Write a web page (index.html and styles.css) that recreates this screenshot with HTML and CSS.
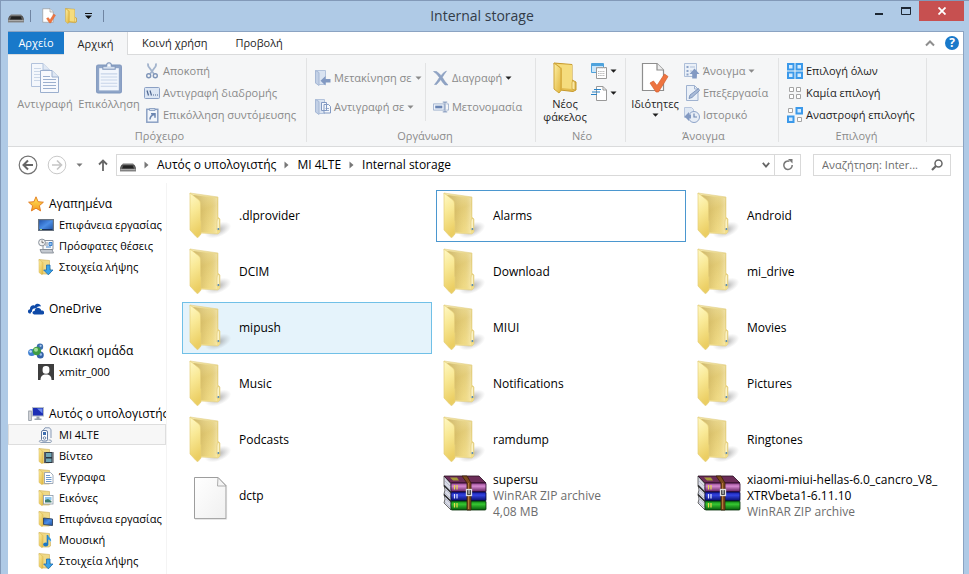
FILE: index.html
```html
<!DOCTYPE html>
<html lang="el">
<head>
<meta charset="utf-8">
<meta name="viewport" content="width=device-width, initial-scale=1">
<title>Internal storage</title>
<link rel="stylesheet" href="styles.css">
</head>
<body>
<svg class="defs" aria-hidden="true">
  <defs>
    <linearGradient id="gBack" x1="0" y1="0" x2="0.3" y2="1"><stop offset="0" stop-color="#f3e7ab"/><stop offset="0.5" stop-color="#e6d07c"/><stop offset="1" stop-color="#f3df8b"/></linearGradient>
    <linearGradient id="gShade" x1="0" y1="0" x2="1" y2="0"><stop offset="0" stop-color="#a5862f" stop-opacity="0.5"/><stop offset="0.7" stop-color="#c7a74c" stop-opacity="0.1"/><stop offset="1" stop-color="#fff" stop-opacity="0.25"/></linearGradient>
    <linearGradient id="gFront" x1="0" y1="0" x2="0.2" y2="1"><stop offset="0" stop-color="#fff9c6"/><stop offset="0.45" stop-color="#f9e996"/><stop offset="1" stop-color="#ebce63"/></linearGradient>
    <radialGradient id="gShadow"><stop offset="0" stop-color="#777" stop-opacity="0.6"/><stop offset="1" stop-color="#999" stop-opacity="0"/></radialGradient>
    <linearGradient id="gGold" x1="0" y1="0" x2="1" y2="1"><stop offset="0" stop-color="#fdf0a4"/><stop offset="1" stop-color="#e0b43c"/></linearGradient>
    <linearGradient id="gPage" x1="0" y1="0" x2="1" y2="1"><stop offset="0" stop-color="#fff"/><stop offset="1" stop-color="#f0f0f0"/></linearGradient>
    <linearGradient id="gPurple" x1="0" y1="0" x2="0" y2="1"><stop offset="0" stop-color="#8c3f86"/><stop offset="0.35" stop-color="#d78bd2"/><stop offset="1" stop-color="#5b1a58"/></linearGradient>
    <linearGradient id="gBlue" x1="0" y1="0" x2="0" y2="1"><stop offset="0" stop-color="#1419a0"/><stop offset="0.35" stop-color="#3344e2"/><stop offset="1" stop-color="#060a66"/></linearGradient>
    <linearGradient id="gGreen" x1="0" y1="0" x2="0" y2="1"><stop offset="0" stop-color="#0a7a14"/><stop offset="0.35" stop-color="#37c832"/><stop offset="1" stop-color="#055a0b"/></linearGradient>
    <linearGradient id="gScreen" x1="0" y1="0" x2="1" y2="1"><stop offset="0" stop-color="#1c4fa8"/><stop offset="0.5" stop-color="#4b8ee6"/><stop offset="1" stop-color="#1d4f9f"/></linearGradient>
    <linearGradient id="gStar" x1="0" y1="0" x2="0" y2="1"><stop offset="0" stop-color="#ffe65a"/><stop offset="1" stop-color="#f59a1f"/></linearGradient>
    <linearGradient id="gDrive" x1="0" y1="0" x2="0" y2="1"><stop offset="0" stop-color="#4b4b4b"/><stop offset="1" stop-color="#8b8b8b"/></linearGradient>
  </defs>

  <symbol id="folder" viewBox="0 0 48 48">
    <ellipse cx="30" cy="38" rx="14" ry="7" fill="url(#gShadow)" transform="rotate(-22 30 38)"/>
    <path d="M2 1 L30 5 V25 L32 27 V40 L30 42 L12 41 Z" fill="url(#gBack)" stroke="#e2d08c" stroke-width="0.6"/>
    <path d="M5 3 L29 6 V41 L12 40 Z" fill="url(#gShade)"/>
    <path d="M2 1 L11 8 Q12.500 9.500 12.500 12 V28 L13 29 V42 L10 45.500 Q9 45.500 8 44.500 L2 38 Z" fill="url(#gFront)" stroke="#e5cf78" stroke-width="0.7"/>
    <path d="M30 26.500 Q31.500 26 31.500 28 V38 H29 V30 Q29 27 30 26.500Z" fill="#fbf3c6" stroke="#d9bf66" stroke-width="0.5"/>
    <path d="M29.600 36h1.600v2h-1.600z" fill="#5f8fb0"/>
  </symbol>

  <symbol id="file" viewBox="0 0 48 48">
    <path d="M6.500 5.500 H30 L38 13.500 V46.500 H6.500 Z" fill="url(#gPage)" stroke="#9d9d9d"/>
    <path d="M30 5.500 L29.500 14 H38 Z" fill="#f4f4f4" stroke="#a5a5a5" stroke-width="0.9"/>
    <path d="M7 47.200H38.600V14" fill="none" stroke="#cfcfcf" stroke-width="0.7"/>
  </symbol>

  <symbol id="rar" viewBox="0 0 48 48">
    <path d="M2 4 L9 12 V38 L2 31 L3 27 L2 22 L3 18 L2 13 Z" fill="#d9dbe6" stroke="#333" stroke-width="0.7"/>
    <path d="M3 9l6 6M3 13l6 6M3 17l6 6M3 21l6 6M3 26l6 6M3 30l6 6" stroke="#b6b9ca" stroke-width="0.9"/>
    <path d="M2 4 H37 L44 11 H9 Z" fill="#6c2d58" stroke="#2b0f22" stroke-width="0.8"/>
    <path d="M8 5.500h7l2 3h-6z" fill="#a59b37"/>
    <rect x="9" y="11" width="35" height="9" rx="1" fill="url(#gPurple)" stroke="#28092a" stroke-width="0.8"/>
    <rect x="9" y="20" width="35" height="9" rx="1" fill="url(#gBlue)" stroke="#040432" stroke-width="0.8"/>
    <rect x="9" y="29" width="35" height="9" rx="1" fill="url(#gGreen)" stroke="#032f06" stroke-width="0.8"/>
    <path d="M12.500 13v4.500M15 13v4.500M12.500 31v4.500M15 31v4.500" stroke="#ead94a" stroke-width="1.200"/>
    <path d="M12.500 22v4.500M15 22v4.500" stroke="#dfe3ff" stroke-width="1.200"/>
    <path d="M2 13.500l7 7M2 22.500l7 7" stroke="#222" stroke-width="1.300"/>
    <path d="M20 4h5l4 7v27h-4V11z" fill="#7d4a1d" stroke="#3b1f08" stroke-width="0.8"/>
    <path d="M26.500 11v26" stroke="#b67a3c"/>
    <rect x="24.500" y="17.500" width="5" height="6" fill="#333" stroke="#e0e0e0" stroke-width="1.300"/>
    <path d="M27 18v4" stroke="#f4f4f4"/>
  </symbol>

  <symbol id="s-folder" viewBox="0 0 16 16">
    <path d="M1 .5 L11.500 1.500 V9 L12.500 10 V14 L11 15 H4Z" fill="#efd987" stroke="#cfae55" stroke-width="0.6"/>
    <path d="M1 .5 L5 3.500 V14.500 L4 15.700 L1 13.500Z" fill="url(#gGold)" stroke="#d7b654" stroke-width="0.5"/>
  </symbol>
  <symbol id="s-down" viewBox="0 0 16 16"><use href="#s-folder"/><path d="M8.500 6h3.500v5h3L10.300 15.800 5.700 11h2.800z" fill="#3aa3e8" stroke="#1c6cb4" stroke-width="0.8"/></symbol>
  <symbol id="s-video" viewBox="0 0 16 16"><use href="#s-folder"/><rect x="6" y="4" width="9.500" height="11" fill="#2c3440"/><path d="M8 5h5.500v4H8zM8 10.500h5.500V14H8z" fill="#6fa5b5"/><path d="M6.900 4.500v10.500M14.600 4.500v10.500" stroke="#e6e6e6" stroke-width="0.8" stroke-dasharray="1 1"/></symbol>
  <symbol id="s-doc" viewBox="0 0 16 16"><use href="#s-folder"/><path d="M6.500 3.500h6l2.500 2.500v8.500h-8.500z" fill="#fff" stroke="#8b98a8" stroke-width="0.8"/><path d="M8 6.500h4M8 8.500h5.500M8 10.500h5.500M8 12.500h5.500" stroke="#5d8fc8" stroke-width="0.9"/></symbol>
  <symbol id="s-pic" viewBox="0 0 16 16"><use href="#s-folder"/><rect x="5.500" y="5.500" width="9.500" height="8.500" fill="#fff" stroke="#8b98a8" stroke-width="0.8"/><path d="M7 7h6.500v3H7z" fill="#8cc6ee"/><path d="M7 12.500V10l3-1 3.500 2v1.500z" fill="#3e7d6f"/></symbol>
  <symbol id="s-deskf" viewBox="0 0 16 16"><use href="#s-folder"/><path d="M5.500 7 L14.500 8 V14.500 L5.500 13.500Z" fill="url(#gScreen)" stroke="#31435e" stroke-width="0.9"/></symbol>
  <symbol id="s-music" viewBox="0 0 16 16"><use href="#s-folder"/><path d="M9.500 3v9" stroke="#1c78c4" stroke-width="1.600"/><path d="M9.500 2.500c.5 3 4.500 3 3.500 7.500-.8-2-2-2.500-3.500-2.800z" fill="#2f94dc"/><ellipse cx="7.700" cy="12.500" rx="2.600" ry="2" fill="#1c78c4"/></symbol>
  <symbol id="s-star" viewBox="0 0 16 16"><path d="M8 .8l2.100 4.900 5.300.5-4 3.500 1.200 5.200L8 12.200l-4.600 2.700 1.200-5.200-4-3.500 5.300-.5z" fill="url(#gStar)" stroke="#e0761a" stroke-width="0.9" stroke-linejoin="round"/></symbol>
  <symbol id="s-desk" viewBox="0 0 16 16"><rect x=".6" y="2.600" width="14.800" height="10.800" fill="url(#gScreen)" stroke="#6a7480" stroke-width="1.200"/><path d="M1.500 12.500h13" stroke="#16305e"/><path d="M2 12.500h2" stroke="#9fd27a"/></symbol>
  <symbol id="s-recent" viewBox="0 0 16 16"><path d="M5 2.500h10v9H5z" fill="#fafafa" stroke="#8a929c"/><path d="M7 5h3M7 7h3" stroke="#8a929c"/><path d="M11 4.500h3v3h-3zM8 9h5" stroke="#3f83cf" fill="#8fc0ee"/><circle cx="4" cy="4.500" r="3.400" fill="#f2f2f2" stroke="#8a929c"/><path d="M4 2.500v2.200h1.800" fill="none" stroke="#555" stroke-width="0.8"/><path d="M2 11.500h12l1.500 3.500H3.500z" fill="#c4c9d0" stroke="#7b838d" stroke-width="0.8"/></symbol>
  <symbol id="s-cloud" viewBox="0 0 16 16"><path d="M1.500 12.500C-.9 12-.4 8.200 2 8.200 1.800 5 4.800 3.600 6.600 4.800 8 1.900 12.300 2.200 13 5.400 10.800 4.900 9.200 5.600 8.300 7.400 5.600 6.900 3.700 8.400 4 10.800c-1 .3-1.300.9-1.200 1.700z" fill="#0f4aa8"/><path d="M6 13.500c-2.200-.5-2-3.900.6-3.600C6.900 6 12.200 5.700 13.300 9.500c3.500-.3 3.900 4 1.100 4z" fill="#0f4aa8"/></symbol>
  <symbol id="s-home" viewBox="0 0 16 16"><circle cx="3.700" cy="9.500" r="3.600" fill="#3f7fd0"/><circle cx="12" cy="3.800" r="3.200" fill="#3d6fae"/><circle cx="12.300" cy="12" r="3.500" fill="#3463a9"/><circle cx="8.800" cy="8" r="4.300" fill="#3f9c44"/><circle cx="8" cy="6.700" r="2" fill="#a5e19a"/><circle cx="2.600" cy="8.500" r="1.300" fill="#c7dffa"/><circle cx="12.600" cy="2.800" r="1.100" fill="#a9c6ea"/><circle cx="12.800" cy="11.500" r="1.200" fill="#9dbfe8"/></symbol>
  <symbol id="s-user" viewBox="0 0 16 16"><rect width="16" height="16" fill="#3e3e3e"/><rect x="4.600" y="2" width="6.800" height="7.800" rx="3" fill="#fff"/><path d="M2.500 16c0-4 2-5 4-5.500h3c2 .5 4 1.500 4 5.500z" fill="#fff"/></symbol>
  <symbol id="s-pc" viewBox="0 0 16 16"><rect x="4.500" y="1.500" width="11" height="8.500" fill="#1d2fb5" stroke="#b4bcc6"/><path d="M9 2.500h5.500v5z" fill="#6f8cf0"/><path d="M8.500 10.500h3v2h2v1.500H6.500v-1.500h2z" fill="#98a2ad"/><rect x=".7" y="5" width="2.600" height="9.500" fill="#d6d9dd" stroke="#8a929c" stroke-width="0.8"/></symbol>
  <symbol id="s-phone" viewBox="0 0 16 16"><path d="M5 3.500L7 .8h4.500l1.500 2V11" fill="#eef2f8" stroke="#7d90ad" stroke-width="0.9"/><rect x="3.500" y="3.500" width="6" height="10.500" rx="1.500" fill="#fff" stroke="#506c96" stroke-width="0.9"/><path d="M5 5h3v3H5z" fill="#3f6fb0"/><circle cx="6.500" cy="11" r="1.300" fill="none" stroke="#506c96" stroke-width="0.8"/><path d="M3 13.500c-3 0-2 2 1 2h8c2 0 2-2.500 0-2.500h-1.500" fill="none" stroke="#8fa0b8"/></symbol>

  <symbol id="s-drive" viewBox="0 0 16 16"><path d="M3 6.500h10l2 2H1z" fill="#777"/><path d="M1.500 8h13L16 10.500V14.500H0v-4z" fill="url(#gDrive)"/><path d="M3.500 8.500h9l1.500 3H2z" fill="#222"/><path d="M.5 12.500h15" stroke="#aaa"/></symbol>
  <symbol id="check-page" viewBox="0 0 28 32"><path d="M1.500 1.500H16L22.500 8V28.500H1.500z" fill="#fff" stroke="#8e8e8e" stroke-width="1.200"/><path d="M16 1.500V8h6.500" fill="#eee" stroke="#8e8e8e" stroke-width="1.200"/><path d="M9 21l3.500-2 3.500 4.500L23.500 12l3.500 2.500L17.500 30h-2.500z" fill="#ee7440" stroke="#d45f2f" stroke-width="0.7"/></symbol>
  <symbol id="gold-folder" viewBox="0 0 24 32"><path d="M1 1l18 1.500V18l4 2v8l-3 1.500L7 28z" fill="#e4bd50" stroke="#c79a2c"/><path d="M3 2l6 4v20l10 1V3z" fill="#f5dc7d"/><path d="M1 1l6 4.500q1 1 1 2.500v20.500L6 31 1 27z" fill="url(#gGold)" stroke="#cfa538"/><path d="M20 19q2 0 2 2v7l-3-1v-6q0-2 1-2z" fill="#fbe9a2" stroke="#c99d33" stroke-width="0.7"/></symbol>
  <symbol id="copy" viewBox="0 0 28 30"><g fill="#f4f7fc" stroke="#b2c2dc"><path d="M.5 .5H12L18.500 7V23.500H.5z"/><path d="M12 .5V7h6.500" fill="#dfe8f4"/><path d="M3 5.500h7M3 8.500h7M3 11.500h6M3 14.500h6M3 17.500h6" stroke="#cbd7e8"/></g><g fill="#f7f9fd" stroke="#9bafce"><path d="M9.500 7.500H21L27.500 14V29.500H9.500z"/><path d="M21 7.500V14h6.500" fill="#dfe8f4"/><path d="M12 13.500h7M12 16.500h13M12 19.500h13M12 22.500h13M12 25.500h13"/></g></symbol>
  <symbol id="paste" viewBox="0 0 26 31"><rect x="1" y="3" width="24" height="27" rx="1.500" fill="#8fa5c8" stroke="#7f97be"/><rect x="3.500" y="6" width="19" height="21.500" fill="#f2f6fc"/><path d="M5 11.500h16M5 14.500h16M5 17.500h16M5 20.500h16M5 23.500h16" stroke="#c6d3e7"/><path d="M7 7V4h3.500Q10.500 .8 13 .8T15.500 4H19v3z" fill="#d4dfee" stroke="#8298bc"/><circle cx="13" cy="3.300" r="1" fill="#fff"/></symbol>
  <symbol id="cut" viewBox="0 0 16 16"><path d="M4.500 .5q-1 1 0 3L10 11M11.500 .5q1 1 0 3L6 11" fill="none" stroke="#a3b4cd" stroke-width="1.800"/><circle cx="4.700" cy="12.800" r="2" fill="none" stroke="#7f95b8" stroke-width="1.400"/><circle cx="11.300" cy="12.800" r="2" fill="none" stroke="#7f95b8" stroke-width="1.400"/></symbol>
  <symbol id="path" viewBox="0 0 16 16"><rect x=".5" y="2.500" width="15" height="11" rx="1" fill="#dce6f4" stroke="#8ba0c4"/><path d="M3 5.500l1.500 5M6 5.500l1.500 5" stroke="#4d6690" stroke-width="1.200"/><path d="M9 10h1M11 10h1M13 10h1" stroke="#4d6690" stroke-width="1.200"/></symbol>
  <symbol id="shortcut" viewBox="0 0 16 16"><rect x="2.800" y="2.300" width="11" height="12.900" fill="#f2f6fc" stroke="#8ba0c4" stroke-width="1.500"/><path d="M5.500 3.500V1.500h5.500v2z" fill="#d4dfee" stroke="#8298bc" stroke-width="0.8"/><path d="M6 12.500Q6 8.500 10.500 7.500M7 6.800h4v4" fill="none" stroke="#6c86b1" stroke-width="1.500"/></symbol>
  <symbol id="moveto" viewBox="0 0 16 16"><path d="M.5 .5h10v14H4L.5 13z" fill="#d9e3f1" stroke="#b3c3dc"/><path d="M.5 .5L4 2.500V15.500L.5 13z" fill="#c2d0e6" stroke="#a6b8d5"/><path d="M15.500 9h-5V6L5.500 10.800l5 4.700v-3h5z" fill="#8299c2"/></symbol>
  <symbol id="copyto" viewBox="0 0 16 16"><path d="M.5 .5h9v14H4L.5 13z" fill="#d9e3f1" stroke="#b3c3dc"/><path d="M.5 .5L4 2.500V15.500L.5 13z" fill="#c2d0e6" stroke="#a6b8d5"/><path d="M6.500 3.500h5v8h-5zM9 5.500h4.500l2 2v6.500H9z" fill="#f5f8fc" stroke="#8299c2"/><path d="M10.500 9.500h3.500M10.500 11.500h3.500" stroke="#8299c2" stroke-width="0.8"/></symbol>
  <symbol id="delete" viewBox="0 0 16 16"><path d="M.5 1.500h3Q7 4 8 5.700 10.500 2 13.500 1 11 4.500 9.300 7.300 11.500 11.500 15 15h-3Q9 12 7.800 9.500 5.500 12.500 3.500 14.500H1.500Q4.500 11 6.400 7.500 4 3.500 .5 1.500z" fill="#8fa3c4" stroke="#7f94b8" stroke-width="0.500"/></symbol>
  <symbol id="rename" viewBox="0 0 18 16"><path d="M.5 4.500h12v7H.5z" fill="#eef3fa" stroke="#9dafcd"/><path d="M2.500 6.500h8v3h-8z" fill="#6984b4"/><path d="M11 2.500h5M13.500 2.500v11M11 13.500h5" fill="none" stroke="#7089b3"/><path d="M15 4.500h2.500v7H15" fill="none" stroke="#9dafcd"/></symbol>
  <symbol id="newitem" viewBox="0 0 16 16"><path d="M.5 .5h12v9H.5z" fill="#cbe6fa" stroke="#4fa3dc"/><path d="M1 2h11.500" stroke="#4fa3dc" stroke-width="2"/><path d="M5.500 4.500h10v11h-10z" fill="#fff" stroke="#999"/><path d="M6 5h9M7 8.500h7M7 10.500h7M7 12.500h7" stroke="#bbb" stroke-dasharray="1.500 .7"/></symbol>
  <symbol id="easy" viewBox="0 0 16 16"><path d="M5.500 1.500h6.500l3.500 3.500v10.500h-10z" fill="#fff" stroke="#999"/><path d="M12 1.500V5h3.500" fill="none" stroke="#999"/><path d="M3 4.500h7M1 7h8M0 9.500h6" stroke="#2b84c7" stroke-width="1.200"/></symbol>
  <symbol id="open" viewBox="0 0 16 16"><path d="M.5 .5h12v13H.5z" fill="#eaf0f8" stroke="#aebfd9"/><path d="M2.500 3h2v2h-2zM2.500 7h2v2h-2zM2.500 10.500h2v2h-2z" fill="#8da3c8"/><path d="M6 4h5M6 8h2" stroke="#aebfd9"/><path d="M10.500 5.500l5 5.500h-2.700v4.500H8.200V11H5.500z" fill="#8299c2"/></symbol>
  <symbol id="edit" viewBox="0 0 16 16"><path d="M2.500 .5h8l3.500 3.500v11.500H2.500z" fill="#eaf0f8" stroke="#9fb2d0"/><path d="M10.500 .5V4H14" fill="none" stroke="#9fb2d0"/><path d="M5 13.500l1-3.500 8.500-6.500 1 2L8 12.500z" fill="#a9bbd8" stroke="#7089b3" stroke-width="0.800"/></symbol>
  <symbol id="history" viewBox="0 0 16 16"><path d="M.5 .5h7l2 2v8h-9z" fill="#dfe8f4" stroke="#b7c6de"/><circle cx="10" cy="10" r="5.500" fill="#e7edf6" stroke="#8da3c8"/><path d="M10 6.500V10h3" fill="none" stroke="#6f88b2" stroke-width="1.200"/><path d="M.5 9.500L5 5v2.500h2v4H5V14z" fill="#8299c2"/></symbol>
  <symbol id="sel-all" viewBox="0 0 16 16"><path d="M0 0h7.500v7.500H0zM8.500 0H16v7.500H8.500zM0 8.500h7.500V16H0zM8.500 8.500H16V16H8.500z" fill="#3b99ea"/><path d="M2 2h3.500v3.500H2zM10.500 2H14v3.500h-3.500zM2 10.500h3.500V14H2zM10.500 10.500H14V14h-3.500z" fill="#d3ebff"/></symbol>
  <symbol id="sel-none" viewBox="0 0 16 16"><path d="M2.500 2.500h4v4h-4zM9.500 2.500h4v4h-4zM2.500 9.500h4v4h-4zM9.500 9.500h4v4h-4z" fill="#fff" stroke="#a4a4a4"/></symbol>
  <symbol id="sel-inv" viewBox="0 0 16 16"><path d="M1.500 1.500h4v4h-4zM10.500 10.500h4v4h-4z" fill="#fff" stroke="#a4a4a4"/><path d="M8.500 0H16v7.500H8.500zM0 8.500h7.500V16H0z" fill="#3b99ea"/><path d="M10.500 2h3.500v3.500h-3.500zM2 10.500h3.500V14H2z" fill="#d3ebff"/></symbol>
  <symbol id="caret" viewBox="0 0 7 4"><path d="M.5 .5h6l-3 3.200z" fill="currentColor"/></symbol>
  <symbol id="chev" viewBox="0 0 5 8"><path d="M.5 .5v7l4-3.500z" fill="#777"/></symbol>
</svg>

<div class="window">
  <header class="titlebar">
    <div class="quick">
      <svg class="i16"><use href="#s-drive"/></svg>
      <span class="bar"></span>
      <button class="plain" aria-label="Ιδιότητες"><svg class="i16"><use href="#check-page"/></svg></button>
      <button class="plain" aria-label="Νέος φάκελος"><svg class="i16"><use href="#gold-folder"/></svg></button>
      <button class="plain" aria-label="Προσαρμογή"><svg class="custom" viewBox="0 0 7 6"><path d="M0 .5h7" stroke="#111"/><path d="M0 2.500h7L3.500 6z" fill="#111"/></svg></button>
      <span class="bar"></span>
    </div>
    <h1>Internal storage</h1>
    <div class="controls">
      <button class="ctl" aria-label="Ελαχιστοποίηση"><svg width="10" height="10" viewBox="0 0 10 10"><path d="M1 8h8" stroke="#1d2733" stroke-width="2"/></svg></button>
      <button class="ctl" aria-label="Μεγιστοποίηση"><svg width="10" height="10" viewBox="0 0 10 10"><path d="M.5 2v6.500h9V2" fill="none" stroke="#1d2733"/><path d="M0 2h10" stroke="#1d2733" stroke-width="2"/></svg></button>
      <button class="ctl close" aria-label="Κλείσιμο"><svg width="8" height="8" viewBox="0 0 8 8"><path d="M.5 .5l7 7M7.500 .5l-7 7" stroke="#fff" stroke-width="1.800"/></svg></button>
    </div>
  </header>

  <main class="client">
    <div class="tabs">
      <button class="tab file">Αρχείο</button>
      <button class="tab active">Αρχική</button>
      <button class="tab">Κοινή χρήση</button>
      <button class="tab">Προβολή</button>
      <div class="tab-end">
        <button class="plain" aria-label="Σύμπτυξη"><svg width="10" height="7" viewBox="0 0 10 7"><path d="M1 5.500l4-4 4 4" fill="none" stroke="#8e8e8e" stroke-width="2"/></svg></button>
        <button class="help" aria-label="Βοήθεια">?</button>
      </div>
    </div>

    <div class="ribbon">
      <section class="group g-clip">
        <div class="tools">
          <button class="big" disabled><svg class="i-big"><use href="#copy"/></svg>Αντιγραφή</button>
          <button class="big" disabled><svg class="i-big"><use href="#paste"/></svg>Επικόλληση</button>
          <div class="stack">
            <button class="small" disabled><svg class="i16"><use href="#cut"/></svg>Αποκοπή</button>
            <button class="small" disabled><svg class="i16"><use href="#path"/></svg>Αντιγραφή διαδρομής</button>
            <button class="small" disabled><svg class="i16"><use href="#shortcut"/></svg>Επικόλληση συντόμευσης</button>
          </div>
        </div>
        <h2>Πρόχειρο</h2>
      </section>
      <section class="group g-org">
        <div class="tools">
          <div class="stack two">
            <button class="small" disabled><svg class="i16"><use href="#moveto"/></svg>Μετακίνηση σε<svg class="caret"><use href="#caret"/></svg></button>
            <button class="small" disabled><svg class="i16"><use href="#copyto"/></svg>Αντιγραφή σε<svg class="caret"><use href="#caret"/></svg></button>
          </div>
          <div class="stack two ruled">
            <button class="small" disabled><svg class="i16"><use href="#delete"/></svg>Διαγραφή<svg class="caret dark"><use href="#caret"/></svg></button>
            <button class="small" disabled><svg class="i16"><use href="#rename"/></svg>Μετονομασία</button>
          </div>
        </div>
        <h2>Οργάνωση</h2>
      </section>
      <section class="group g-new">
        <div class="tools">
          <button class="big"><svg class="i-big"><use href="#gold-folder"/></svg>Νέος<br>φάκελος</button>
          <div class="stack">
            <button class="small" aria-label="Νέο στοιχείο"><svg class="i16"><use href="#newitem"/></svg><svg class="caret"><use href="#caret"/></svg></button>
            <button class="small" aria-label="Εύκολη πρόσβαση"><svg class="i16"><use href="#easy"/></svg><svg class="caret"><use href="#caret"/></svg></button>
          </div>
        </div>
        <h2>Νέο</h2>
      </section>
      <section class="group g-open">
        <div class="tools">
          <button class="big"><svg class="i-big"><use href="#check-page"/></svg>Ιδιότητες<svg class="caret"><use href="#caret"/></svg></button>
          <div class="stack">
            <button class="small" disabled><svg class="i16"><use href="#open"/></svg>Άνοιγμα<svg class="caret"><use href="#caret"/></svg></button>
            <button class="small" disabled><svg class="i16"><use href="#edit"/></svg>Επεξεργασία</button>
            <button class="small" disabled><svg class="i16"><use href="#history"/></svg>Ιστορικό</button>
          </div>
        </div>
        <h2>Άνοιγμα</h2>
      </section>
      <section class="group g-sel">
        <div class="tools">
          <div class="stack">
            <button class="small"><svg class="i16"><use href="#sel-all"/></svg>Επιλογή όλων</button>
            <button class="small"><svg class="i16"><use href="#sel-none"/></svg>Καμία επιλογή</button>
            <button class="small"><svg class="i16"><use href="#sel-inv"/></svg>Αναστροφή επιλογής</button>
          </div>
        </div>
        <h2>Επιλογή</h2>
      </section>
    </div>

    <div class="address-row">
      <div class="history">
        <button class="plain" aria-label="Πίσω"><svg width="20" height="20" viewBox="0 0 20 20"><circle cx="10" cy="10" r="8.800" fill="#fff" stroke="#737373" stroke-width="1.200"/><path d="M15 10H6M10 5.500L5.500 10l4.500 4.500" fill="none" stroke="#666" stroke-width="2"/></svg></button>
        <button class="plain" aria-label="Εμπρός"><svg width="20" height="20" viewBox="0 0 20 20"><circle cx="10" cy="10" r="8.800" fill="#fff" stroke="#c9c9c9"/><path d="M5 10h9M10 5.500l4.500 4.500-4.500 4.500" fill="none" stroke="#c5c5c5" stroke-width="1.600"/></svg></button>
        <button class="plain" aria-label="Πρόσφατες"><svg class="caret"><use href="#caret"/></svg></button>
        <button class="plain" aria-label="Επάνω"><svg width="10" height="12" viewBox="0 0 10 12"><path d="M5 12V2M1 5.500l4-4 4 4" fill="none" stroke="#666" stroke-width="1.800"/></svg></button>
      </div>
      <div class="address">
        <svg class="i16"><use href="#s-drive"/></svg>
        <svg class="chev"><use href="#chev"/></svg><a href="#">Αυτός ο υπολογιστής</a>
        <svg class="chev"><use href="#chev"/></svg><a href="#">MI 4LTE</a>
        <svg class="chev"><use href="#chev"/></svg><a href="#">Internal storage</a>
        <button class="plain drop" aria-label="Προηγούμενες θέσεις"><svg width="8" height="6" viewBox="0 0 8 6"><path d="M.8 .8L4 4.500 7.200 .8" fill="none" stroke="#666" stroke-width="1.800"/></svg></button>
        <button class="refresh" aria-label="Ανανέωση"><svg width="12" height="12" viewBox="0 0 12 12"><path d="M7.500 2.300A4.200 4.200 0 1 0 10.200 6" fill="none" stroke="#777" stroke-width="1.500"/><path d="M6 0h4.500v4.500z" fill="#777"/></svg></button>
      </div>
      <label class="search"><input type="text" aria-label="Αναζήτηση" placeholder="Αναζήτηση: Inter..."><svg width="12" height="12" viewBox="0 0 12 12"><circle cx="7.500" cy="4.500" r="3.500" fill="none" stroke="#666" stroke-width="1.500"/><path d="M5 7L1 11" stroke="#666" stroke-width="2.200"/></svg></label>
    </div>

    <div class="panes">
      <nav class="tree">
        <ul>
          <li><a href="#"><svg class="i16"><use href="#s-star"/></svg>Αγαπημένα</a></li>
          <li class="sub"><a href="#"><svg class="i16"><use href="#s-desk"/></svg>Επιφάνεια εργασίας</a></li>
          <li class="sub"><a href="#"><svg class="i16"><use href="#s-recent"/></svg>Πρόσφατες θέσεις</a></li>
          <li class="sub"><a href="#"><svg class="i16"><use href="#s-down"/></svg>Στοιχεία λήψης</a></li>
        </ul>
        <ul>
          <li><a href="#"><svg class="i16"><use href="#s-cloud"/></svg>OneDrive</a></li>
        </ul>
        <ul>
          <li><a href="#"><svg class="i16"><use href="#s-home"/></svg>Οικιακή ομάδα</a></li>
          <li class="sub"><a href="#"><svg class="i16"><use href="#s-user"/></svg>xmitr_000</a></li>
        </ul>
        <ul>
          <li><a href="#"><svg class="i16"><use href="#s-pc"/></svg>Αυτός ο υπολογιστής</a></li>
          <li class="sub current"><a href="#"><svg class="i16"><use href="#s-phone"/></svg>MI 4LTE</a></li>
          <li class="sub"><a href="#"><svg class="i16"><use href="#s-video"/></svg>Βίντεο</a></li>
          <li class="sub"><a href="#"><svg class="i16"><use href="#s-doc"/></svg>Έγγραφα</a></li>
          <li class="sub"><a href="#"><svg class="i16"><use href="#s-pic"/></svg>Εικόνες</a></li>
          <li class="sub"><a href="#"><svg class="i16"><use href="#s-deskf"/></svg>Επιφάνεια εργασίας</a></li>
          <li class="sub"><a href="#"><svg class="i16"><use href="#s-music"/></svg>Μουσική</a></li>
          <li class="sub"><a href="#"><svg class="i16"><use href="#s-down"/></svg>Στοιχεία λήψης</a></li>
        </ul>
      </nav>
      <ul class="files">
        <li class="item"><svg class="i48"><use href="#folder"/></svg><p>.dlprovider</p></li>
        <li class="item focus"><svg class="i48"><use href="#folder"/></svg><p>Alarms</p></li>
        <li class="item"><svg class="i48"><use href="#folder"/></svg><p>Android</p></li>
        <li class="item"><svg class="i48"><use href="#folder"/></svg><p>DCIM</p></li>
        <li class="item"><svg class="i48"><use href="#folder"/></svg><p>Download</p></li>
        <li class="item"><svg class="i48"><use href="#folder"/></svg><p>mi_drive</p></li>
        <li class="item hover"><svg class="i48"><use href="#folder"/></svg><p>mipush</p></li>
        <li class="item"><svg class="i48"><use href="#folder"/></svg><p>MIUI</p></li>
        <li class="item"><svg class="i48"><use href="#folder"/></svg><p>Movies</p></li>
        <li class="item"><svg class="i48"><use href="#folder"/></svg><p>Music</p></li>
        <li class="item"><svg class="i48"><use href="#folder"/></svg><p>Notifications</p></li>
        <li class="item"><svg class="i48"><use href="#folder"/></svg><p>Pictures</p></li>
        <li class="item"><svg class="i48"><use href="#folder"/></svg><p>Podcasts</p></li>
        <li class="item"><svg class="i48"><use href="#folder"/></svg><p>ramdump</p></li>
        <li class="item"><svg class="i48"><use href="#folder"/></svg><p>Ringtones</p></li>
        <li class="item"><svg class="i48"><use href="#file"/></svg><p>dctp</p></li>
        <li class="item"><svg class="i48"><use href="#rar"/></svg><p>supersu<br><span>WinRAR ZIP archive</span><br><span>4,08 MB</span></p></li>
        <li class="item"><svg class="i48"><use href="#rar"/></svg><p>xiaomi-miui-hellas-6.0_cancro_V8_<br>XTRVbeta1-6.11.10<br><span>WinRAR ZIP archive</span></p></li>
      </ul>
    </div>
  </main>
</div>
</body>
</html>
```
FILE: styles.css
```css
* { box-sizing: border-box; }

body {
  margin: 0;
  height: 100vh;
  overflow: hidden;
  font: 12px/16px "Open Sans", "Noto Sans", sans-serif;
  color: #000;
}

ul, h1, h2, p { margin: 0; padding: 0; list-style: none; }
a { color: inherit; text-decoration: none; }
button { font: inherit; color: inherit; margin: 0; padding: 0; border: 0; background: none; }
svg { display: block; flex: none; }

.defs { position: absolute; width: 0; height: 0; }
.i16 { width: 16px; height: 16px; }
.i48 { width: 48px; height: 48px; }
.caret { width: 7px; height: 4px; }
.chev { width: 5px; height: 8px; }

.window {
  height: 100%;
  display: flex;
  flex-direction: column;
  padding: 0 5px 0 7px;
  background: #afcae6;
  border-top: 1px solid #8299b8;
  border-left: 1px solid #8299b8;
}

/* Title bar */
.titlebar {
  flex: none;
  height: 30px;
  display: grid;
  grid-template-columns: 1fr auto 1fr;
  align-items: start;
}
.titlebar h1 { padding-right: 8px; font-size: 14px; line-height: 30px; font-weight: 400; color: #333c48; }
.quick { display: flex; align-items: center; height: 30px; gap: 6px; }
.bar { width: 1px; height: 12px; background: #7085a2; }
.quick .bar:last-child { margin-left: 5px; }
.quick .bar + button { margin-left: 4px; }
.custom { width: 7px; height: 6px; }
.controls { display: flex; justify-content: flex-end; }
.ctl { width: 27px; height: 20px; display: grid; place-items: center; }
.close { width: 45px; background: #c75050; }

/* Client area */
.client {
  flex: 1;
  min-height: 0;
  display: flex;
  flex-direction: column;
  background: #fff;
  border: solid #8ba3c2;
  border-width: 1px 1px 0 0;
}

.tabs { flex: none; display: flex; height: 23px; border-bottom: 1px solid #dadbdc; font-size: 11px; }
.tab { padding: 0 14px; color: #1e1e1e; }
.tab.file { width: 56px; padding: 0; background: #1979ca; color: #fff; }
.tab.active { height: 23px; width: 64px; padding: 0; background: #f5f6f7; border-right: 1px solid #dadbdc; }
.tab-end { margin-left: auto; display: flex; align-items: center; gap: 10px; padding-right: 4px; }
.help { width: 14px; height: 14px; border-radius: 50%; background: #1979ca; color: #fff; font-size: 12px; font-weight: 700; line-height: 14px; }

/* Ribbon */
.ribbon { flex: none; display: flex; height: 92px; padding: 3px 0 4px; background: #f5f6f7; border-bottom: 1px solid #dadbdc; color: #1e1e1e; font-size: 11px; }
.group { display: flex; flex-direction: column; border-right: 1px solid #e2e3e4; }
.g-clip { width: 299px; padding-left: 5px; }
.g-org { width: 229px; padding-left: 8px; }
.g-new { width: 90px; padding-left: 3px; }
.g-open { width: 153px; padding-left: 3px; }
.g-sel { width: 148px; padding-left: 8px; }
.group h2 { font-size: 11px; line-height: 12px; font-weight: 400; text-align: center; color: #8b8b8b; }
.tools { flex: 1; display: flex; padding-top: 2px; white-space: nowrap; }
.big { display: flex; flex-direction: column; align-items: center; line-height: 13px; padding-top: 2px; min-width: 52px; }
.g-clip .big { width: 64px; }
.i-big { width: 28px; height: 32px; margin-bottom: 3px; }
.big .caret { margin-top: 3px; }
.small { display: flex; align-items: center; gap: 3px; height: 22px; }
.g-clip .stack, .g-open .stack { margin-left: 3px; }
.stack.two { margin-top: 3px; width: 112px; }
.stack.two .small { height: 29px; }
.stack.ruled { padding-left: 7px; border-left: 1px solid #e2e3e4; height: 58px; }
button:disabled { color: #8a8a8a; }
.caret.dark { color: #222; }

/* Address row */
.address-row { flex: none; display: flex; height: 36px; padding: 7px 12px 7px 10px; }
.history { display: flex; align-items: center; gap: 9px; width: 98px; color: #777; }
.history .plain:nth-child(4) { margin-left: 6px; }
.address { flex: 1; display: flex; align-items: center; gap: 8px; padding-left: 3px; border: 1px solid #d9d9d9; }
.drop { margin-left: auto; }
.refresh { width: 26px; height: 20px; display: grid; place-items: center; margin-left: -4px; border-left: 1px solid #d9d9d9; }
.search { width: 138px; margin-left: 12px; display: flex; align-items: center; border: 1px solid #d9d9d9; padding: 0 7px 0 8px; }
.search input { flex: 1; min-width: 0; border: 0; padding: 0; outline: 0; background: none; font: inherit; font-size: 11px; }
.search input::placeholder { color: #6d6d6d; opacity: 1; }

/* Navigation tree and files */
.panes { flex: 1; min-height: 0; display: flex; }
.tree { flex: none; width: 159px; margin-right: 15px; padding-top: 10px; overflow: hidden; white-space: nowrap; border-right: 1px solid #f4f4f4; }
.tree ul { margin-bottom: 21px; }
.tree li { height: 21px; padding-left: 19px; border: 1px solid transparent; }
.tree .sub { padding-left: 29px; font-size: 11px; }
.tree a { display: flex; align-items: center; gap: 5px; height: 19px; }
.tree .current { background: #f7f7f7; border-color: #dedede; }

.files {
  flex: 1;
  padding-top: 7px;
  display: grid;
  grid-template-columns: repeat(auto-fill, 250px);
  gap: 4px;
  align-content: start;
}
.item { height: 52px; padding: 1px 0 1px 5px; display: flex; align-items: center; gap: 3px; border: 1px solid transparent; white-space: nowrap; }
.item span { color: #6d6d6d; }
.item.focus { border-color: #4b97cf; }
.item.hover { background: #e5f3fb; border-color: #70c0e7; }
```
